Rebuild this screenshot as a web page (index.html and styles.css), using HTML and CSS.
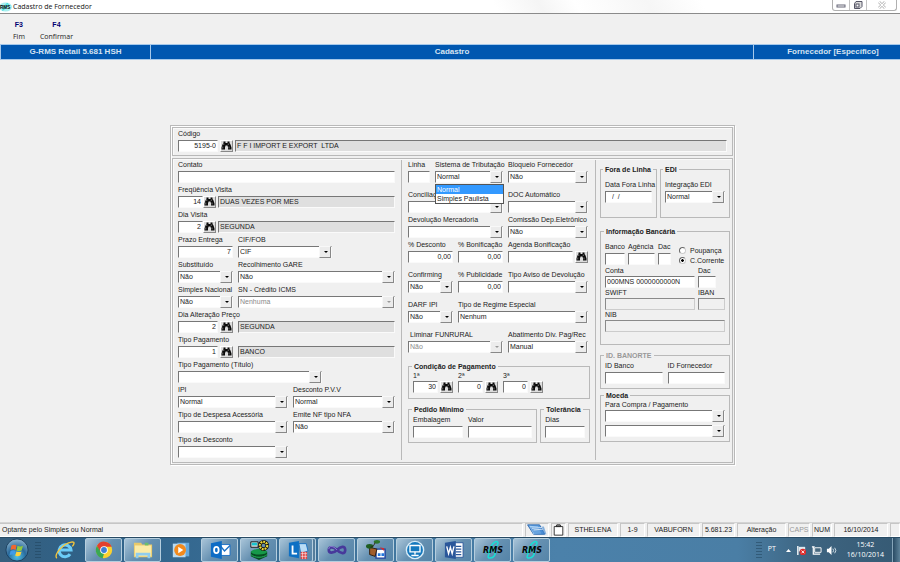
FILE: index.html
```html
<!DOCTYPE html>
<html lang="pt-BR">
<head>
<meta charset="utf-8">
<title>Cadastro de Fornecedor</title>
<link rel="stylesheet" href="styles.css">
</head>
<body>
<svg class="defs" aria-hidden="true">
  <symbol id="binoculars" viewBox="0 0 22 18">
    <path d="M5 1h4v3h4V1h4v3l2 3 2 6v4h-7v-6h-1v-2H9v2H8v6H1v-4l2-6 2-3z" fill="#0a0a0a"/>
    <path d="M5.500 5v3M3.500 11v4M14.500 5v3M16 11v4" stroke="#d8d8d8" stroke-width="1"/>
  </symbol>
  <symbol id="rms" viewBox="0 0 24 20">
    <path d="M9 10C10 3 17-1 17 3c0 3-5 5-8 9-2 4-3 6 0 6 4 0 6-4 5-6M5 13c6-5 13-4 8 0" fill="none" stroke="#19dfd5" stroke-width="1.500"/>
    <text x="12" y="13" text-anchor="middle" class="rms-text">RMS</text>
  </symbol>
</svg>

<header class="titlebar">
  <svg class="title-icon" viewBox="0 0 13 12"><ellipse cx="6" cy="6" rx="7" ry="5" fill="#a8efef"/><path d="M3 10C5 1 11 1 8 5L4 9" fill="none" stroke="#18d8d8"/><text x="0" y="8" class="mini-text">RMS</text></svg>
  <h1>Cadastro de Fornecedor</h1>
  <div class="window-buttons">
    <button type="button" aria-label="Minimizar"><svg viewBox="0 0 10 8"><rect x="1" y="4" width="8" height="2" fill="#fff" stroke="#667"/></svg></button>
    <button type="button" aria-label="Restaurar"><svg viewBox="0 0 10 8"><path d="M3 .5h6v5l-2 2H1.500v-5z" fill="#ddd" stroke="#556"/><rect x="3" y="3" width="3" height="3" fill="#fff" stroke="#556"/></svg></button>
    <button type="button" aria-label="Fechar" class="close" disabled><svg viewBox="0 0 10 8"><path d="M2 1l6 6M8 1L2 7" stroke="#ccc" stroke-width="3"/><path d="M2 1l6 6M8 1L2 7" stroke="#fff" stroke-width="1"/></svg></button>
  </div>
</header>

<nav class="menubar">
  <button type="button"><b>F3</b><span>Fim</span></button>
  <button type="button"><b>F4</b><span>Confirmar</span></button>
</nav>

<div class="banner"><div>G-RMS Retail 5.681 HSH</div><div>Cadastro</div><div>Fornecedor [Específico]</div></div>

<main class="workspace">
<form class="record">
  <section class="panel code">
    <label for="codigo">Código</label>
    <div class="line">
      <input id="codigo" class="w40 num" value="5195-0">
      <button type="button" class="find gap-l" aria-label="Buscar código"><svg><use href="#binoculars"/></svg></button>
      <output class="grow">F F I IMPORT E EXPORT &nbsp;LTDA</output>
    </div>
  </section>

  <section class="panel columns">
    <div class="col general">
      <div class="field"><label for="contato">Contato</label><input id="contato"></div>
      <div class="field"><label for="freq">Freqüência Visita</label>
        <div class="line"><input id="freq" class="w25 num" value="14"><button type="button" class="find" aria-label="Buscar freqüência"><svg><use href="#binoculars"/></svg></button><output class="grow">DUAS VEZES POR MES</output></div></div>
      <div class="field"><label for="dia">Dia Visita</label>
        <div class="line"><input id="dia" class="w25 num" value="2"><button type="button" class="find" aria-label="Buscar dia"><svg><use href="#binoculars"/></svg></button><output class="grow">SEGUNDA</output></div></div>
      <div class="row">
        <div class="field w55"><label for="prazo">Prazo Entrega</label><input id="prazo" class="num" value="7"></div>
        <div class="field w94"><label for="cif">CIF/FOB</label><span class="combo"><select id="cif"><option>CIF</option></select></span></div>
      </div>
      <div class="row">
        <div class="field w55"><label for="subst">Substituído</label><span class="combo"><select id="subst"><option>Não</option></select></span></div>
        <div class="field grow"><label for="gare">Recolhimento GARE</label><span class="combo"><select id="gare"><option>Não</option></select></span></div>
      </div>
      <div class="row">
        <div class="field w55"><label for="simples">Simples Nacional</label><span class="combo"><select id="simples"><option>Não</option></select></span></div>
        <div class="field grow"><label for="icms">SN - Crédito ICMS</label><span class="combo"><select id="icms" disabled><option>Nenhuma</option></select></span></div>
      </div>
      <div class="field"><label for="preco">Dia Alteração Preço</label>
        <div class="line"><input id="preco" class="w40 num" value="2"><button type="button" class="find gap-l" aria-label="Buscar dia de alteração"><svg><use href="#binoculars"/></svg></button><output class="grow far">SEGUNDA</output></div></div>
      <div class="field"><label for="tipopag">Tipo Pagamento</label>
        <div class="line"><input id="tipopag" class="w40 num" value="1"><button type="button" class="find gap-l" aria-label="Buscar tipo de pagamento"><svg><use href="#binoculars"/></svg></button><output class="grow far">BANCO</output></div></div>
      <div class="field w144"><label for="titulo">Tipo Pagamento (Título)</label><span class="combo"><select id="titulo"><option></option></select></span></div>
      <div class="row">
        <div class="field w110"><label for="ipi">IPI</label><span class="combo"><select id="ipi"><option>Normal</option></select></span></div>
        <div class="field grow"><label for="pvv">Desconto P.V.V</label><span class="combo"><select id="pvv"><option>Normal</option></select></span></div>
      </div>
      <div class="row">
        <div class="field w110"><label for="despesa">Tipo de Despesa Acessória</label><span class="combo"><select id="despesa"><option></option></select></span></div>
        <div class="field grow"><label for="nfa">Emite NF tipo NFA</label><span class="combo"><select id="nfa"><option>Não</option></select></span></div>
      </div>
      <div class="field w110"><label for="desconto">Tipo de Desconto</label><span class="combo"><select id="desconto"><option></option></select></span></div>
    </div>

    <div class="col fiscal">
      <div class="cells">
        <div class="row span2">
          <div class="field w22"><label for="linha">Linha</label><input id="linha"></div>
          <div class="field grow"><label for="tribut">Sistema de Tributação</label>
            <span class="combo"><select id="tribut"><option>Normal</option><option>Simples Paulista</option></select>
              <ul class="options"><li class="chosen">Normal</li><li>Simples Paulista</li></ul></span></div>
        </div>
        <div class="field"><label for="bloq">Bloqueio Fornecedor</label><span class="combo"><select id="bloq"><option>Não</option></select></span></div>
      </div>
      <div class="cells spaced">
        <div class="field span2"><label for="concil">Conciliação</label><span class="combo"><select id="concil"><option></option></select></span></div>
        <div class="field"><label for="doc">DOC Automático</label><span class="combo"><select id="doc"><option></option></select></span></div>
      </div>
      <div class="cells">
        <div class="field span2"><label for="devol">Devolução Mercadoria</label><span class="combo"><select id="devol"><option></option></select></span></div>
        <div class="field"><label for="comissao">Comissão Dep.Eletrônico</label><span class="combo"><select id="comissao"><option>Não</option></select></span></div>
      </div>
      <div class="cells">
        <div class="field"><label for="pdesc">% Desconto</label><input id="pdesc" class="num" value="0,00"></div>
        <div class="field"><label for="pbon">% Bonificação</label><input id="pbon" class="num" value="0,00"></div>
        <div class="field"><label for="agenda">Agenda Bonificação</label><div class="line"><input id="agenda" class="grow"><button type="button" class="find gap-l" aria-label="Buscar agenda"><svg><use href="#binoculars"/></svg></button></div></div>
      </div>
      <div class="cells spaced">
        <div class="field"><label for="conf">Confirming</label><span class="combo"><select id="conf"><option>Não</option></select></span></div>
        <div class="field"><label for="publ">% Publicidade</label><input id="publ" class="num" value="0,00"></div>
        <div class="field"><label for="aviso">Tipo Aviso de Devolução</label><span class="combo"><select id="aviso"><option></option></select></span></div>
      </div>
      <div class="cells spaced">
        <div class="field"><label for="darf">DARF IPI</label><span class="combo"><select id="darf"><option>Não</option></select></span></div>
        <div class="field span2"><label for="regime">Tipo de Regime Especial</label><span class="combo"><select id="regime"><option>Nenhum</option></select></span></div>
      </div>
      <div class="cells spaced">
        <div class="field span2"><label for="funrural" class="indent">Liminar FUNRURAL</label><span class="combo"><select id="funrural" disabled><option>Não</option></select></span></div>
        <div class="field"><label for="abat">Abatimento Div. Pag/Rec</label><span class="combo"><select id="abat"><option>Manual</option></select></span></div>
      </div>
      <fieldset class="terms">
        <legend>Condição de Pagamento</legend>
        <div class="row">
          <div class="field snug"><label for="p1">1ª</label><div class="line"><input id="p1" class="w25 num" value="30"><button type="button" class="find gap-l" aria-label="Buscar 1ª"><svg><use href="#binoculars"/></svg></button></div></div>
          <div class="field snug"><label for="p2">2ª</label><div class="line"><input id="p2" class="w25 num" value="0"><button type="button" class="find gap-l" aria-label="Buscar 2ª"><svg><use href="#binoculars"/></svg></button></div></div>
          <div class="field snug"><label for="p3">3ª</label><div class="line"><input id="p3" class="w25 num" value="0"><button type="button" class="find gap-l" aria-label="Buscar 3ª"><svg><use href="#binoculars"/></svg></button></div></div>
        </div>
      </fieldset>
      <div class="pair minimums">
        <fieldset>
          <legend>Pedido Mínimo</legend>
          <div class="row"><div class="field w50"><label for="emb">Embalagem</label><input id="emb"></div><div class="field grow"><label for="valor">Valor</label><input id="valor"></div></div>
        </fieldset>
        <fieldset>
          <legend>Tolerância</legend>
          <div class="field"><label for="dias">Dias</label><input id="dias"></div>
        </fieldset>
      </div>
    </div>

    <div class="col banking">
      <div class="pair status">
        <fieldset>
          <legend>Fora de Linha</legend>
          <div class="field"><label for="datafora">Data Fora Linha</label><input id="datafora" class="date" value="/  /"></div>
        </fieldset>
        <fieldset>
          <legend>EDI</legend>
          <div class="field"><label for="edi">Integração EDI</label><span class="combo"><select id="edi"><option>Normal</option></select></span></div>
        </fieldset>
      </div>
      <fieldset class="bank">
        <legend>Informação Bancária</legend>
        <div class="row account">
          <div class="field w20"><label for="banco">Banco</label><input id="banco"></div>
          <div class="field w27"><label for="agencia">Agência</label><input id="agencia"></div>
          <div class="field w12"><label for="dac">Dac</label><input id="dac"></div>
          <div class="choices">
            <label><input type="radio" name="conta-tipo">Poupança</label>
            <label><input type="radio" name="conta-tipo" checked>C.Corrente</label>
          </div>
        </div>
        <div class="row tight">
          <div class="field snug w90"><label for="conta">Conta</label><input id="conta" value="000MNS 0000000000N"></div>
          <div class="field snug w18"><label for="dac2">Dac</label><input id="dac2"></div>
        </div>
        <div class="row tight">
          <div class="field w90"><label for="swift">SWIFT</label><input id="swift" disabled></div>
          <div class="field grow"><label for="iban">IBAN</label><input id="iban" disabled></div>
        </div>
        <div class="field"><label for="nib">NIB</label><input id="nib" disabled></div>
      </fieldset>
      <fieldset class="banorte">
        <legend>ID. BANORTE</legend>
        <div class="row"><div class="field grow"><label for="idb">ID Banco</label><input id="idb"></div><div class="field grow"><label for="idf">ID Fornecedor</label><input id="idf"></div></div>
      </fieldset>
      <fieldset class="currency">
        <legend>Moeda</legend>
        <div class="field snug"><label for="compra">Para Compra / Pagamento</label><span class="combo"><select id="compra"><option></option></select></span></div>
        <span class="combo"><select aria-label="Moeda de pagamento"><option></option></select></span>
      </fieldset>
    </div>
  </section>
</form>
</main>

<footer class="statusbar">
  <span class="message">Optante pelo Simples ou Normal</span>
  <span class="icon"><svg viewBox="0 0 24 14"><path d="M1 1h14l6 11H8z" fill="#5f9fe0" stroke="#2862a8"/><path d="M3 2l10 1 4 8-9 1z" fill="#a9d2f7"/><path d="M4 4l16-1 3 9H9z" fill="#3d83cf" opacity=".6"/><path d="M6 5l12-1M8 7l11-1" stroke="#fff" stroke-width=".8"/></svg></span>
  <span class="icon small"><svg viewBox="0 0 14 14"><path d="M2 3h10v10H2z" fill="#fff" stroke="#222" stroke-width="1"/><path d="M4 3l1-2h4l1 2z" fill="#888" stroke="#222"/></svg></span>
  <span class="s50">STHELENA</span><span class="s24">1-9</span><span class="s53">VABUFORN</span><span class="s33">5.681.23</span><span class="s49">Alteração</span><span class="s22 off">CAPS</span><span class="s20">NUM</span><span class="s54">16/10/2014</span><span class="s10"></span>
</footer>

<div class="taskbar">
  <button type="button" class="orb" aria-label="Iniciar"><svg viewBox="0 0 26 26"><defs><radialGradient id="og" cx=".5" cy=".8" r=".8"><stop offset="0" stop-color="#4fc3e8"/><stop offset=".5" stop-color="#2a6a9c"/><stop offset="1" stop-color="#8fb6cf"/></radialGradient></defs><circle cx="13" cy="13" r="12" fill="url(#og)" stroke="#1b3e5c"/><path d="M7 8c2-1 4-1 5.500 0L11.500 13C10 12 8 12 6 13z" fill="#f0672d"/><path d="M13.500 8.500c2 1 4 1 6 0L18 13.500c-2 1-4 1-5.500 0z" fill="#8fc93f"/><path d="M6 14c2-1 4-1 5.500 0L10 18.500c-1.500-1-3-1-5 0z" fill="#3f9be8"/><path d="M12.500 14.500c2 1 4 1 5.500 0L16.500 19c-2 1-4 1-5.500 0z" fill="#fdd03b"/></svg></button>
  <span class="grip"></span>
  <button type="button" class="task plain" aria-label="Internet Explorer"><svg viewBox="0 0 24 22"><path d="M17.500 15.500A6.500 6.500 0 1 1 18.500 11H6" fill="none" stroke="#6ccdf8" stroke-width="3.500"/><path d="M3 20C0 17 8 4 20 2c3 0 2 3 0 5" fill="none" stroke="#f5c63c" stroke-width="1.500"/></svg></button>
  <button type="button" class="task" aria-label="Chrome"><svg viewBox="0 0 24 22"><circle cx="12" cy="11" r="9" fill="#fbd12f"/><path d="M4.200 6.500A9 9 0 0 1 20.500 7.500H12l-4 6z" fill="#e2402f"/><path d="M4.200 6.500 8.500 13l3.500 2-1.500 5A9 9 0 0 1 4.200 6.500" fill="#3aa853"/><circle cx="12" cy="11" r="4.200" fill="#fff"/><circle cx="12" cy="11" r="3.200" fill="#3c7fd6"/></svg></button>
  <button type="button" class="task" aria-label="Explorador"><svg viewBox="0 0 24 22"><path d="M2 3h8l1 2h11v14H2z" fill="#e8c96a"/><path d="M3 6h18v12H3z" fill="#fbeba6"/><path d="M14 3h4v3h-4z" fill="#6bbf6b"/><path d="M4 20v-6h16v6h-3v-3H7v3z" fill="#8fcdee"/></svg></button>
  <button type="button" class="task plain" aria-label="Media Player"><svg viewBox="0 0 24 22"><path d="M8 3h13v15H8z" fill="#64a8dc"/><path d="M3 4h14v15H3z" fill="#b9daf0"/><circle cx="11" cy="11" r="6.500" fill="#f28a1d"/><path d="M9 7.500v7l5.500-3.500z" fill="#fff"/></svg></button>
  <button type="button" class="task" aria-label="Outlook"><svg viewBox="0 0 24 22"><path d="M12 5h11v12H12z" fill="#fff" stroke="#1a6fc4"/><path d="M12 6l5 6 6-6" fill="none" stroke="#1a6fc4" stroke-width="1.500"/><path d="M2 3.500 14 1v20L2 18.500z" fill="#0d6cc5"/><ellipse cx="8" cy="11" rx="2.500" ry="3.500" fill="none" stroke="#fff" stroke-width="2"/></svg></button>
  <button type="button" class="task" aria-label="Serviços"><svg viewBox="0 0 24 22"><path d="M3 13l9-3 9 3v5l-9 4-9-4z" fill="#064d22"/><ellipse cx="12" cy="13" rx="9" ry="3" fill="#16994a"/><path d="M3 16c4 4 14 4 18 0" fill="none" stroke="#28b862"/><path d="M3 2h8v6H3z" fill="#ddd" stroke="#111"/><path d="M4 3h6v3H4z" fill="#19c3cf"/><circle cx="17" cy="6" r="4" fill="none" stroke="#111" stroke-width="4"/><circle cx="17" cy="6" r="4" fill="none" stroke="#f1dc38" stroke-width="2.500" stroke-dasharray="2 1"/></svg></button>
  <button type="button" class="task stacked" aria-label="Lync"><svg viewBox="0 0 24 22"><path d="M13 4h8l2 8-8 3z" fill="#b9dcf5" stroke="#176fc0"/><path d="M2 3l11-2v19L2 18z" fill="#0d70c4"/><path d="M6 6v9h5" fill="none" stroke="#fff" stroke-width="2"/><path d="M15 13h7v8h-7z" fill="#e24747"/><path d="M15 15h7M15 18h7M17 13v8M20 13v8" stroke="#fff" stroke-width=".6"/></svg></button>
  <button type="button" class="task" aria-label="Visual Studio"><svg viewBox="0 0 24 22"><path d="M12 11C8 7 3 7 3 11s5 4 9 0 9-5 9 0-5 4-9 0z" fill="none" stroke="#47399b" stroke-width="3"/><path d="M3 10c0-4 5-4 9 1" fill="none" stroke="#8f82d6"/></svg></button>
  <button type="button" class="task" aria-label="Agenda"><svg viewBox="0 0 24 22"><path d="M12 10h10v10H12z" fill="#fff" stroke="#1c3f9c" stroke-width="1.500"/><path d="M14 16h3M18 16h3" stroke="#27d" stroke-width="3"/><path d="M5 8l8 2-2 8-6-2z" fill="#a15e2c" stroke="#301a0a"/><ellipse cx="5" cy="7" rx="4" ry="2.500" fill="#1e5d20"/><ellipse cx="13" cy="2" rx="3.500" ry="2" fill="#2b762a"/><path d="M6 8c3 0 4-3 5-5" fill="none" stroke="#2c1a10"/><path d="M16 8l5 1v3z" fill="#d6292a"/></svg></button>
  <button type="button" class="task" aria-label="Acesso remoto"><svg viewBox="0 0 24 22"><circle cx="12" cy="11" r="9.500" fill="#1579be" stroke="#d9edf8" stroke-width="1.500"/><path d="M6.500 6h11v7h-11z" fill="none" stroke="#fff" stroke-width="1.500"/><path d="M12 13v3M8 17h8" stroke="#fff" stroke-width="1.500"/></svg></button>
  <button type="button" class="task" aria-label="Word"><svg viewBox="0 0 24 22"><path d="M12 3h10v16H12z" fill="#fff" stroke="#2a579a"/><path d="M14 7h6M14 10h6M14 13h6M14 16h6" stroke="#2a579a" stroke-width="1.300"/><path d="M2 3l12-2v20L2 19z" fill="#2a579a"/><path d="M4 7l2 8 2-7 2 7 2-8" fill="none" stroke="#fff" stroke-width="1.500"/></svg></button>
  <button type="button" class="task" aria-label="RMS 1"><svg class="logo"><use href="#rms"/></svg></button>
  <button type="button" class="task" aria-label="RMS 2"><svg class="logo"><use href="#rms"/></svg></button>
  <div class="tray">
    <span class="grip"></span><span class="lang">PT</span>
    <svg viewBox="0 0 7 10"><path d="M1 7l2.500-3L6 7z" fill="#fff"/></svg>
    <svg class="wide" viewBox="0 0 12 12"><path d="M2 1v10" stroke="#fff" stroke-width="1.500"/><path d="M3 2h7v5H3z" fill="#dfe9ef"/><circle cx="7.500" cy="7.500" r="3.500" fill="#de2a2a"/><path d="M6 6l3 3M9 6L6 9" stroke="#fff"/></svg>
    <svg class="wide" viewBox="0 0 12 12"><path d="M4 3h7v5H4z" fill="#46687f" stroke="#fff"/><path d="M1 2h3M2.500 2v8h6M6 10h4" fill="none" stroke="#fff" stroke-width="1.300"/></svg>
    <svg class="wide" viewBox="0 0 12 12"><path d="M1 4h2l3-3v10L3 8H1z" fill="#fff"/><path d="M7.500 4q1.500 2 0 4M9.500 3q2.500 3 0 6" fill="none" stroke="#dde8ef"/></svg>
    <time>15:42<br>16/10/2014</time>
    <button type="button" class="desktop" aria-label="Mostrar área de trabalho"></button>
  </div>
</div>
</body>
</html>
```
FILE: styles.css
```css
* { box-sizing: border-box; }

body {
  margin: 0;
  min-height: 100vh;
  display: flex;
  flex-direction: column;
  background: #f0f0f0;
  color: #222;
  font: 7px/10px "Liberation Sans", Arial, sans-serif;
}

button, input, select, output { font: inherit; color: inherit; }
button { padding: 0; border: 0; background: none; }
.defs { position: absolute; width: 0; height: 0; }

/* Title bar */
.titlebar {
  display: flex;
  align-items: center;
  height: 14px;
  border-bottom: 1px solid #8b8b8b;
  background: linear-gradient(60deg, #fff 40%, #fff 55%, #f5f5f5 60%, #fff 64%, #f6f6f6 72%, #fff 78%);
}
.title-icon { width: 12px; height: 12px; }
.mini-text { font: bold 5px "Liberation Sans", sans-serif; }
.titlebar h1 { margin: 0 0 0 1px; flex: 1; font: 7px/12px "Open Sans", sans-serif; color: #111; }
.window-buttons {
  display: flex;
  align-self: flex-start;
  height: 11px;
  margin-right: 3px;
  border: 1px solid #b0b0b0;
  border-top: 0;
  border-radius: 0 0 3px 3px;
}
.window-buttons button { width: 17px; display: grid; place-items: center; border-right: 1px solid #c4c4c4; }
.window-buttons button.close { width: 29px; border: 0; }
.window-buttons svg { width: 10px; height: 8px; }

/* Function keys */
.menubar { display: flex; height: 30px; padding: 5px 0 0 13px; gap: 15px; }
.menubar button { display: flex; flex-direction: column; align-items: center; font: 7px/12px "Open Sans", sans-serif; }
.menubar b { font-family: "Liberation Sans", sans-serif; color: #000070; }

.banner {
  display: grid;
  grid-template-columns: 150px 1fr 147px;
  border: solid #a5c8ea;
  border-width: 1px 0;
  background: #0057b0;
  color: #d5e3f2;
  font-weight: bold;
  font-size: 8px;
  line-height: 14px;
  text-align: center;
}
.banner div { border-left: 1px solid #a5c8ea; }
.banner div:last-child { padding-left: 12px; }

/* Record form */
.workspace { flex: 1; display: flex; align-items: center; justify-content: center; padding: 7px 0 0 5px; }
.record { width: 100%; max-width: 565px; padding: 1px; border: 1px solid #b9b9b9; box-shadow: inset 1px 1px #fff, 1px 1px #fff; }
.panel { border: 1px solid #b9b9b9; box-shadow: inset 1px 1px #fafafa; }
.code { padding: 1px 5px 3px; margin-bottom: 2px; }
.code label { display: block; height: 11px; }
.columns { display: grid; grid-template-columns: 228fr 194fr 137fr; padding: 1px 0 2px; }
.col { display: flex; flex-direction: column; min-width: 0; padding-bottom: 2px; }
.col + .col { border-left: 1px solid #b9b9b9; }
.general { gap: 2px; padding-left: 5px; padding-right: 6px; }
.fiscal { padding-left: 6px; padding-right: 5px; }
.banking { padding: 5px 2px 0 4px; }

.field { display: flex; flex-direction: column; gap: 1px; min-width: 0; }
.field > label { height: 10px; white-space: nowrap; }
.field.snug { gap: 0; }
.field.snug > label { height: 9px; line-height: 8px; }
.indent { padding-left: 2px; }
.row { display: flex; gap: 5px; }
.line { display: flex; }
.grow { flex: 1; min-width: 0; }
.gap-l { margin-left: 2px; }

.w12 { width: 13px; } .w18 { width: 18px; } .w20 { width: 20px; } .w22 { width: 22px; }
.w25 { width: 25px; } .w27 { width: 27px; } .w40 { width: 40px; } .w50 { width: 50px; }
.w55 { width: 55px; } .w90 { width: 90px; } .w94 { width: 94px; } .w110 { width: 110px; }
.w144 { width: 144px; }

input:not([type]), output, select {
  height: 12px;
  margin: 0;
  padding: 0 1px;
  border: 1px solid;
  border-color: #777 #fafafa #fafafa #777;
  border-radius: 0;
  background: #fff;
  line-height: 10px;
  outline: 0;
}
.field > input:not([type]) { width: 100%; }
input:not([type]):disabled { background: #f0f0f0; border-color: #8a8a8a #ccc #ccc #8a8a8a; }
input.num { text-align: right; padding-right: 1px; }
input.date { padding-left: 6px; white-space: pre; }
output { background: #dfdfdf; margin-left: 2px; white-space: nowrap; }
output.far { margin-left: 5px; }

.find {
  width: 13px;
  height: 12px;
  display: grid;
  place-items: center;
  border: 1px solid;
  border-color: #fff #888 #888 #fff;
  background: #dcdcdc;
}
.find svg { width: 11px; height: 9px; }

.combo { display: grid; position: relative; }
.combo select { appearance: none; grid-area: 1 / 1; width: 100%; padding-right: 11px; }
.combo select:disabled { opacity: 1; color: #8a8a8a; }
.combo::before, .combo::after { content: ""; grid-area: 1 / 1; justify-self: end; align-self: center; pointer-events: none; }
.combo::after { width: 10px; height: 10px; margin-right: 1px; border: 1px solid; border-color: #f8f8f8 #888 #888 #f8f8f8; background: #ececec; }
.combo::before { z-index: 1; margin-right: 4px; border: solid transparent; border-width: 2px 2px 0; border-top-color: #000; }
.combo:has(:disabled)::before { border-top-color: #999; }

.options {
  position: absolute;
  z-index: 3;
  top: 13px;
  left: 0;
  right: -1px;
  margin: 0;
  padding: 0;
  list-style: none;
  border: 1px solid #555;
  background: #fff;
  line-height: 9px;
}
.options li { padding-left: 1px; white-space: nowrap; }
.options .chosen { background: #3399ff; color: #fff; }

.cells { display: grid; grid-template-columns: 45fr 45fr 80fr; gap: 5px; margin: 0 2px 2px 0; }
.cells.spaced { margin-top: 5px; }
.span2 { grid-column: span 2; }

fieldset { min-width: 0; margin: 0; padding: 0 4px 4px; border: 1px solid #b9b9b9; }
legend { margin-left: -1px; padding: 0 2px; font-weight: bold; line-height: 10px; white-space: nowrap; }
.terms { margin-top: 7px; padding-bottom: 5px; }
.pair { display: grid; gap: 3px; }
.minimums { grid-template-columns: 130fr 50fr; margin-top: 6px; }
.status { grid-template-columns: 57fr 70fr; margin-bottom: 9px; }
.status fieldset { padding-top: 5px; padding-bottom: 14px; }
.status legend { margin-left: -2px; }
.bank { padding-top: 5px; padding-bottom: 12px; margin-bottom: 6px; }
.bank .tight { gap: 3px; }
.bank .account { gap: 3px; margin-bottom: 1px; }
.bank .tight .field, .bank > .field { gap: 0; }
.choices { display: flex; flex-direction: column; padding: 4px 0 0 5px; }
.choices label { display: flex; align-items: center; gap: 4px; white-space: nowrap; }
.choices input {
  appearance: none;
  width: 7px;
  height: 7px;
  margin: 0;
  border: 1px solid;
  border-color: #666 #ccc #ccc #666;
  border-radius: 50%;
  background: #fff;
}
.choices input:checked { background: radial-gradient(#000 30%, #fff 45%); }
.banorte { margin-bottom: 2px; }
.banorte legend { color: #999; }
.currency .field { margin-bottom: 3px; }

/* Status bar */
.statusbar { display: flex; gap: 2px; height: 15px; border-top: 1px solid #d4d4d4; }
.statusbar span { border: 1px solid; border-color: #c6c6c6 #fff #fff #c6c6c6; line-height: 12px; text-align: center; white-space: nowrap; }
.statusbar .message { flex: 1; padding-left: 2px; text-align: left; border-left: 0; }
.statusbar .icon { width: 24px; }
.statusbar .icon.small { width: 15px; }
.statusbar .icon svg { display: block; width: 100%; height: 12px; }
.statusbar .off { color: #999; }
.s10 { width: 10px; } .s20 { width: 20px; } .s22 { width: 22px; } .s24 { width: 25px; }
.s33 { width: 33px; } .s49 { width: 49px; } .s50 { width: 50px; } .s53 { width: 53px; } .s54 { width: 54px; }

/* Taskbar */
.taskbar {
  display: flex;
  align-items: center;
  gap: 2px;
  height: 25px;
  border-top: 1px solid #284b64;
  background: linear-gradient(90deg, #365f7e, #2f6289 10%, #4b81aa 62%, #4a7ea5 82%, #3d6480 90%, #365a74);
}
.orb { width: 33px; height: 24px; }
.orb svg { width: 24px; height: 24px; }
.grip { width: 6px; height: 17px; margin-right: 4px; background: repeating-linear-gradient(#1e4058 0 1px, transparent 1px 3px); opacity: .5; }
.task {
  width: 37px;
  height: 24px;
  display: grid;
  place-items: center;
  border: 1px solid #b5cede;
  border-radius: 2px;
  background: linear-gradient(135deg, #a8c4d8, #6590b1 50%, #5584a8);
}
.task.plain { width: 36px; background: none; border-color: transparent; }
.task.stacked { box-shadow: inset -2px 0 #557d9b, inset -3px 0 #b5cede; }
.task svg { width: 22px; height: 20px; }
.task svg.logo { width: 24px; height: 20px; }
.rms-text { font: italic bold 8px "DejaVu Sans", sans-serif; fill: #050505; }
.tray { margin-left: auto; display: flex; align-items: center; height: 24px; color: #fff; font-family: "Open Sans", sans-serif; }
.tray svg { width: 7px; height: 10px; }
.tray svg.wide { width: 11px; height: 11px; margin-left: 4px; }
.tray .lang { margin: 0 9px 2px 2px; }
.tray time { margin-left: 10px; text-align: center; }
.desktop { width: 8px; height: 24px; margin-left: 8px; border-left: 1px solid #86a5b9; background: linear-gradient(90deg, #294b64, #5d8299); }
```
